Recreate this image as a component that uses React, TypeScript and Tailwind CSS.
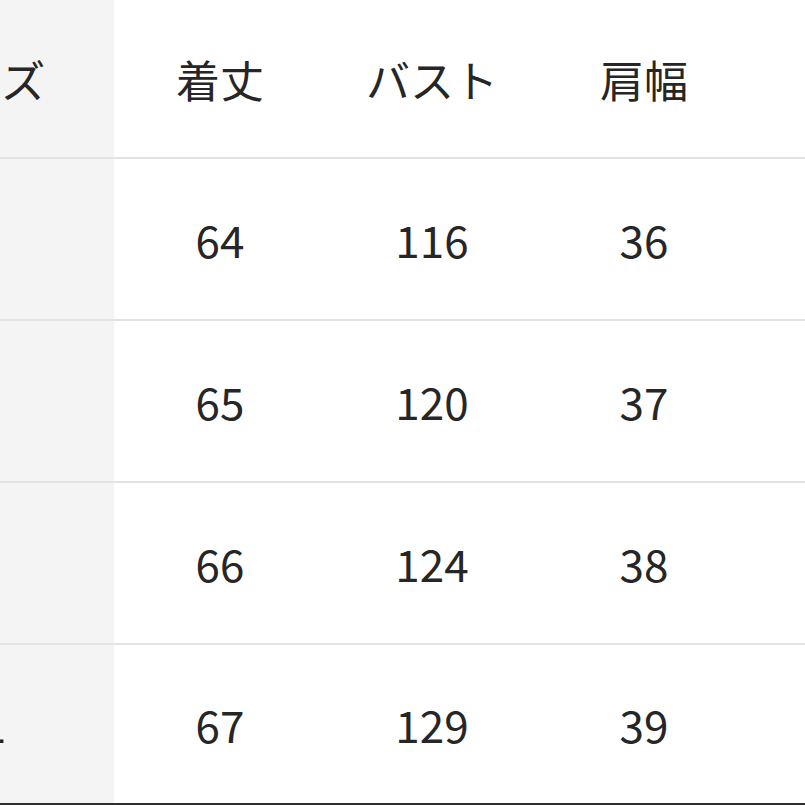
import React from "react";

const rows = [
  { size: "S", v: ["64", "116", "36"] },
  { size: "M", v: ["65", "120", "37"] },
  { size: "L", v: ["66", "124", "38"] },
  { size: "XL", v: ["67", "129", "39"] },
];

function LeftCell({ text }: { text: string }) {
  return (
    <div className="w-[114px] shrink-0 self-stretch overflow-hidden bg-[#f4f4f4] flex items-center">
      <div className="ml-[-154px] w-[268px] shrink-0 text-center">{text}</div>
    </div>
  );
}

export default function App() {
  return (
    <div
      className="w-[805px] h-[805px] overflow-hidden bg-white text-[#262626] text-[44px] leading-none"
      style={{ fontFamily: '"Noto Sans CJK JP", "Noto Sans", sans-serif' }}
    >
      <div className="flex h-[159px] border-b-2 border-[#e3e3e3]">
        <LeftCell text="サイズ" />
        <div className="w-[212px] shrink-0 flex items-center justify-center">着丈</div>
        <div className="w-[212px] shrink-0 flex items-center justify-center">バスト</div>
        <div className="w-[212px] shrink-0 flex items-center justify-center">肩幅</div>
        <div className="flex-1" />
      </div>
      {rows.map((r, i) => (
        <div
          key={r.size}
          className={
            i === rows.length - 1
              ? "flex h-[161px] border-b-[3px] border-[#2e2e2e]"
              : "flex h-[162px] border-b-2 border-[#e3e3e3]"
          }
        >
          <LeftCell text={r.size} />
          {r.v.map((x, j) => (
            <div key={j} className="w-[212px] shrink-0 flex items-center justify-center">
              {x}
            </div>
          ))}
          <div className="flex-1" />
        </div>
      ))}
    </div>
  );
}
